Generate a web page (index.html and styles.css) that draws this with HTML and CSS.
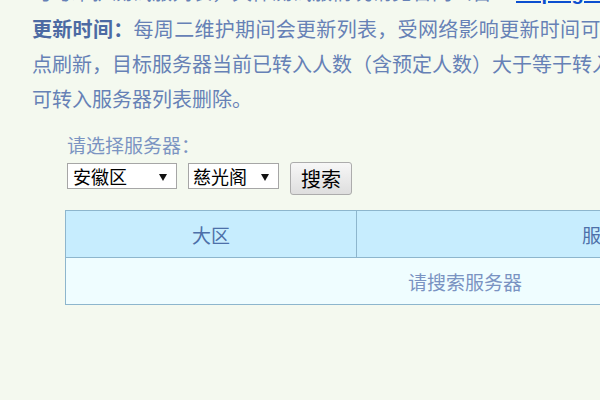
FILE: index.html
```html
<!DOCTYPE html>
<html lang="zh-CN">
<head>
<meta charset="utf-8">
<title>服务器列表</title>
<link rel="stylesheet" href="styles.css">
</head>
<body>
<div class="page">
  <p class="intro">
    <span class="line">可与维护测试服列表，具体测试服情况请见官网公告：<a class="link" href="#">http://gm.qq.com</a></span>
    <span class="line just just-a"><b class="key">更新时间：</b>每周二维护期间会更新列表，受网络影响更新时间可能有</span>
    <span class="line just just-b">点刷新，目标服务器当前已转入人数（含预定人数）大于等于转入上限</span>
    <span class="line">可转入服务器列表删除。</span>
  </p>
  <div class="picker">
    <div class="label">请选择服务器：</div>
    <div class="controls">
      <div class="select select-area"><span class="select-text">安徽区</span><span class="arrow"></span></div>
      <div class="select select-server"><span class="select-text">慈光阁</span><span class="arrow"></span></div>
      <button class="btn" type="button">搜索</button>
    </div>
  </div>
  <table class="grid">
    <thead>
      <tr><th class="col-area">大区</th><th>服务器</th></tr>
    </thead>
    <tbody>
      <tr><td colspan="2" class="empty">请搜索服务器</td></tr>
    </tbody>
  </table>
</div>
</body>
</html>
```
FILE: styles.css
```css
html, body {
  margin: 0;
  padding: 0;
  overflow: hidden;
  background: #f4f9ef;
}
body {
  width: 600px;
  height: 400px;
  font-family: "Noto Sans CJK SC", "Noto Sans", sans-serif;
  color: #6681b6;
}
.page {
  width: 900px;
}
.intro {
  margin: -26px 0 0 0;
  padding-left: 32px;
  font-size: 20px;
  line-height: 35px;
}
.line {
  display: block;
  white-space: nowrap;
}
.just {
  text-align: justify;
  text-align-last: justify;
}
.just-a { width: 609px; }
.just-b { width: 618px; }
.key {
  color: #4c6aa3;
  font-weight: bold;
}
.link {
  color: #0b4fd0;
  font-family: "Liberation Sans", sans-serif;
  font-weight: bold;
  text-decoration: underline;
  margin-left: 4px;
}
.picker {
  margin-left: 67px;
  margin-top: 14px;
}
.label {
  font-size: 19px;
  line-height: 30px;
  color: #7b94c2;
}
.controls {
  display: flex;
  align-items: flex-start;
  gap: 11px;
  margin-top: 2px;
}
.select {
  box-sizing: border-box;
  height: 26px;
  margin-top: 1px;
  background: #fff;
  border: 1px solid #a6a6a6;
  display: flex;
  align-items: center;
  justify-content: space-between;
  padding: 0 9px 0 5px;
  color: #000;
  font-size: 18px;
  line-height: 24px;
}
.select-area { width: 110px; }
.select-server { width: 91px; padding-left: 4px; }
.arrow {
  width: 0;
  height: 0;
  border-left: 4px solid transparent;
  border-right: 4px solid transparent;
  border-top: 7px solid #111;
  margin-top: 2px;
}
.btn {
  box-sizing: border-box;
  width: 62px;
  height: 33px;
  border: 1px solid #acacac;
  border-radius: 3px;
  background: linear-gradient(#f7f7f7, #dedede);
  color: #000;
  font-family: "Noto Sans CJK SC", sans-serif;
  font-size: 20px;
  line-height: 29px;
  padding: 0;
}
.grid {
  margin: 15px 0 0 65px;
  width: 800px;
  border-collapse: collapse;
  font-size: 19px;
}
.grid th, .grid td {
  border: 1px solid #8db6cd;
  height: 46px;
  padding: 0;
  text-align: center;
  vertical-align: middle;
}
.grid th {
  background: #c7edfe;
  color: #4d70a9;
  font-weight: normal;
}
.col-area { width: 290px; }
.grid td {
  background: #effdff;
  color: #7a93c2;
}
```
